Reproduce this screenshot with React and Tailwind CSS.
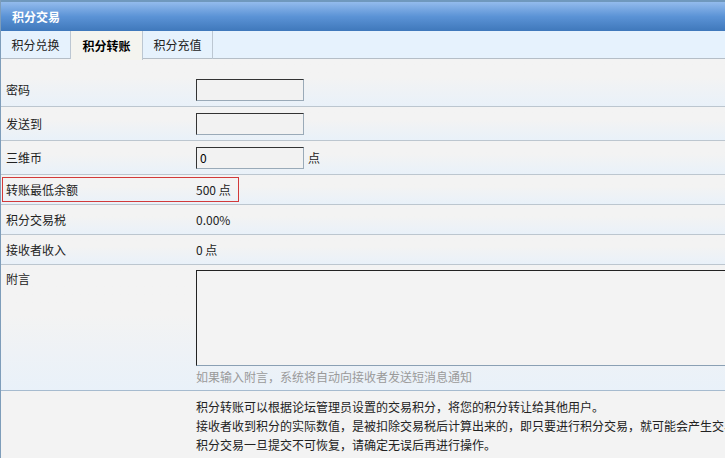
import React from "react";

const font = { fontFamily: '"Noto Sans CJK SC", "Liberation Sans", sans-serif' };

const rowBg = "bg-gradient-to-b from-[#f3f3f3] from-40% to-[#e9f1f9]";

const Input = ({ value }) => (
  <div className="w-[108px] h-[22px] bg-[#f2f2f2] border border-t-[#333] border-l-[#333] border-r-[#9aaab8] border-b-[#9aaab8] px-[3px] text-[12px] leading-[20px] text-black">
    {value}
  </div>
);

const Row = ({ label, children, h = "h-[34px]" }) => (
  <div className={`flex items-center ${h} border-b border-[#bcc6cf] ${rowBg}`}>
    <div className="w-[195px] shrink-0 pl-[5px] text-[12px] text-[#222]">{label}</div>
    <div className="flex items-center gap-[4px] text-[12px] text-[#222]">{children}</div>
  </div>
);

const tabs = [
  { label: "积分兑换", w: "w-[70px]" },
  { label: "积分转账", w: "w-[72px]", active: true },
  { label: "积分充值", w: "w-[70px]" },
];

export default function App() {
  return (
    <div style={font} className="w-[725px] h-[458px] overflow-hidden bg-[#f3f3f3] border-l border-[#7e9dba]">
      {/* Header */}
      <div className="h-[31px] border-t-2 border-[#6f98bd] bg-gradient-to-b from-[#93bbec] via-[#5b93d6] to-[#3f78bb] flex items-center pl-[11px]">
        <span className="text-white font-bold text-[12px]">积分交易</span>
      </div>

      {/* Tabs */}
      <div className="h-[28px] bg-[#e6f2fd] border-b border-[#b5bec7] flex">
        {tabs.map((t) => (
          <div
            key={t.label}
            className={`${t.w} h-[28px] flex items-center justify-center text-[12px] border-r border-[#bcc7d2] ${
              t.active ? "bg-[#f4f4ef] font-bold text-black h-[29px]" : "text-[#222]"
            }`}
          >
            {t.label}
          </div>
        ))}
      </div>

      {/* Form */}
      <Row label="密码" h="h-[48px] pt-[14px]">
        <Input />
      </Row>
      <Row label="发送到">
        <Input />
      </Row>
      <Row label="三维币">
        <Input value="0" />
        <span>点</span>
      </Row>
      <div className={`h-[30px] border-b border-[#bcc6cf] ${rowBg} flex items-center pl-[1px]`}>
        <div className="w-[237px] h-[25px] border border-[#d23a3a] flex items-center text-[12px] text-[#222]">
          <div className="w-[193px] pl-[3px]">转账最低余额</div>
          <div>500 点</div>
        </div>
      </div>
      <Row label="积分交易税" h="h-[30px]">
        <span>0.00%</span>
      </Row>
      <Row label="接收者收入" h="h-[30px]">
        <span>0 点</span>
      </Row>
      <div className={`flex h-[126px] border-b border-[#a6bbcf] ${rowBg}`}>
        <div className="w-[195px] shrink-0 pl-[5px] pt-[5px] text-[12px] text-[#222]">附言</div>
        <div className="shrink-0 pt-[5px]">
          <div className="w-[560px] h-[96px] bg-[#f3f3f3] border border-t-[#222] border-l-[#222] border-r-[#9aaab8] border-b-[#8aa0b4]" />
          <div className="mt-[2px] text-[12px] text-[#9a9a9a] whitespace-nowrap">如果输入附言，系统将自动向接收者发送短消息通知</div>
        </div>
      </div>
      <div className="flex pt-[6px]">
        <div className="w-[195px] shrink-0" />
        <div className="shrink-0 text-[12px] leading-[19px] text-[#222] whitespace-nowrap">
          <div>积分转账可以根据论坛管理员设置的交易积分，将您的积分转让给其他用户。</div>
          <div>接收者收到积分的实际数值，是被扣除交易税后计算出来的，即只要进行积分交易，就可能会产生交易税。</div>
          <div>积分交易一旦提交不可恢复，请确定无误后再进行操作。</div>
        </div>
      </div>
    </div>
  );
}
